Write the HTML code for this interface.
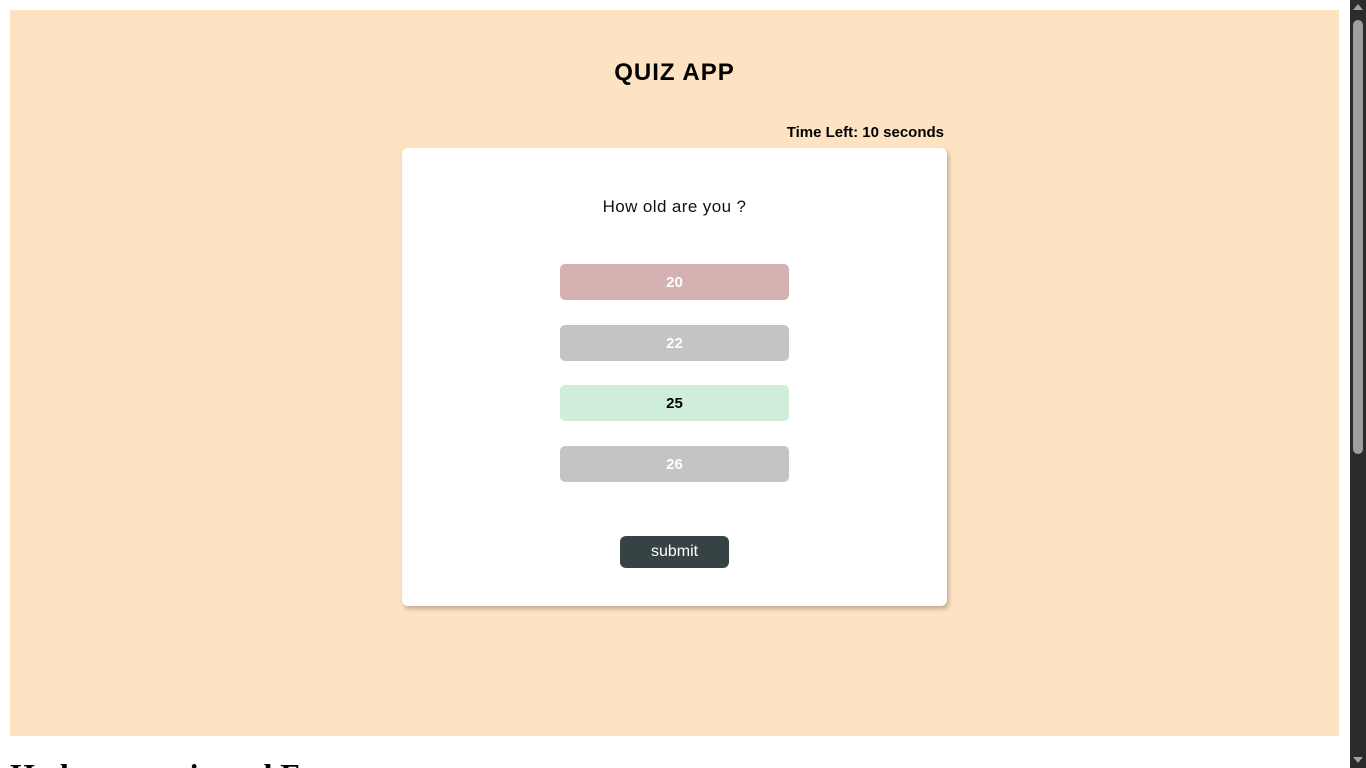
<!DOCTYPE html>
<html><head><style>
html,body{margin:0;padding:0;overflow:hidden;}
body{width:1366px;height:768px;background:#fff;font-family:"Liberation Sans",sans-serif;position:relative;}
.bg{position:absolute;left:10px;top:10px;width:1329px;height:726px;background:#fee3c3;}
h1{position:absolute;left:0;width:1349px;top:59px;margin:0;text-align:center;font-size:24px;font-weight:bold;color:#000;letter-spacing:1px;}
.time{position:absolute;right:422px;top:124px;font-size:15px;font-weight:bold;color:#000;}
.card{position:absolute;left:402px;top:148px;width:545px;height:458px;background:#fff;border-radius:6px;box-shadow:2px 3px 5px rgba(0,0,0,0.25);}
.q{position:absolute;width:545px;top:197px;text-align:center;font-size:17px;color:#111;letter-spacing:0.4px;}
.opt{position:absolute;left:560px;width:229px;height:36px;border-radius:5px;text-align:center;line-height:37px;font-weight:bold;font-size:15px;color:#fff;}
.sub{position:absolute;left:620px;top:536px;width:109px;height:32px;border-radius:6px;background:#374245;color:#fff;text-align:center;line-height:32px;font-size:16px;}
.foot{position:absolute;left:10px;top:757px;font-family:"Liberation Serif",serif;font-weight:bold;font-size:32px;margin:0;}
.sb{position:absolute;left:1350px;top:0;width:16px;height:768px;background:#2b2b2b;}
.th{position:absolute;left:3px;top:20px;width:10px;height:434px;background:#9f9f9f;border-radius:5px;}
</style></head><body>
<div class="bg"></div>
<h1>QUIZ APP</h1>
<div class="time">Time Left: 10 seconds</div>
<div class="card"></div>
<div class="q" style="left:402px">How old are you ?</div>
<div class="opt" style="top:264px;background:#d6b1b1">20</div>
<div class="opt" style="top:325px;background:#c4c4c4">22</div>
<div class="opt" style="top:385px;background:#cfeed9;color:#000">25</div>
<div class="opt" style="top:446px;background:#c4c4c4">26</div>
<div class="sub">submit</div>
<h2 class="foot">Had some quiz and Fun</h2>
<div class="sb"><div class="th"></div>
<div style="position:absolute;left:3px;top:4px;width:0;height:0;border-left:5px solid transparent;border-right:5px solid transparent;border-bottom:6px solid #a0a0a0"></div>
<div style="position:absolute;left:3px;top:757px;width:0;height:0;border-left:5px solid transparent;border-right:5px solid transparent;border-top:6px solid #a0a0a0"></div>
</div>
</body></html>
